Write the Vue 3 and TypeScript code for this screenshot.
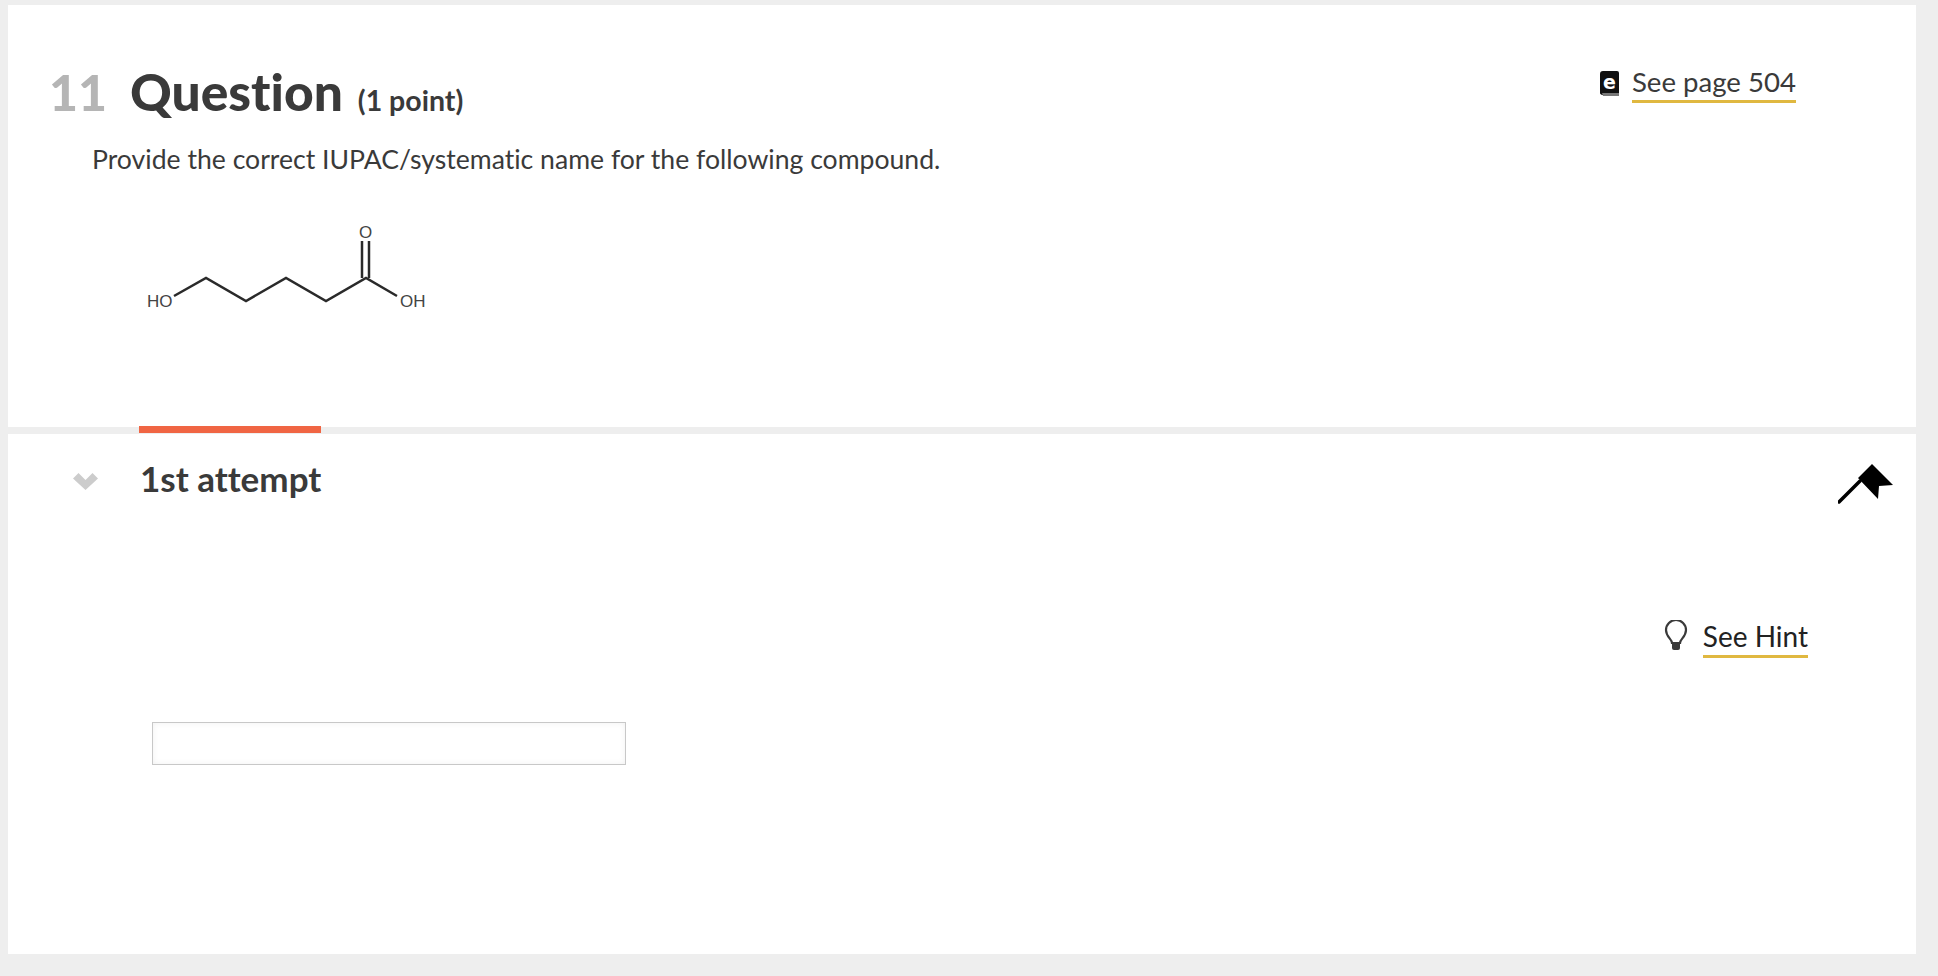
<script setup lang="ts">
const title = 'Question'
const prompt = 'Provide the correct IUPAC/systematic name for the following compound.'
</script>

<template>
  <div class="page">
    <section class="card question">
      <header class="question-head">
        <h1 class="heading">
          <span class="number">11</span>
          <span class="title">{{ title }}</span>
          <span class="points">(1 point)</span>
        </h1>
        <a class="page-link">
          <svg class="book" width="20" height="26" viewBox="0 0 20 26">
            <path d="M3 0h14a2 2 0 0 1 2 2v22H3a2.500 2.500 0 0 1-3-3V3a3 3 0 0 1 3-3z" fill="#111" />
            <path d="M2 22h17v3H3z" fill="#777" />
            <text x="9.500" y="18" text-anchor="middle" class="book-letter">e</text>
          </svg>
          <span class="link-text">See page 504</span>
        </a>
      </header>
      <p class="prompt">{{ prompt }}</p>
      <svg class="molecule" width="300" height="120" viewBox="0 0 300 120">
        <polyline class="bond" points="33,75 65,57 105,80 145,57 185,80 225,57 256,75" />
        <line class="bond" x1="221" y1="57" x2="221" y2="20" />
        <line class="bond" x1="228" y1="57" x2="228" y2="20" />
        <text class="atom" x="6" y="86">HO</text>
        <text class="atom" x="259" y="86">OH</text>
        <text class="atom" x="224.500" y="17" text-anchor="middle">O</text>
      </svg>
    </section>

    <section class="card attempt">
      <span class="attempt-tab"></span>
      <header class="attempt-head">
        <svg class="chevron" width="25" height="17" viewBox="0 0 25 17">
          <path d="M0 5.500l5.500-5.500 7 7 7-7 5.500 5.500-12.500 11.500z" fill="#ccc" />
        </svg>
        <h2 class="attempt-title">1st attempt</h2>
        <svg class="flag" width="56" height="40" viewBox="0 0 56 40">
          <path d="M1 38L22 17" stroke="#000" stroke-width="3.500" stroke-linecap="round" fill="none" />
          <path d="M20 14L34 0l21 21-14 1-1 13z" fill="#000" />
        </svg>
      </header>
      <div class="hint-row">
        <a class="hint-link">
          <svg class="bulb" width="24" height="32" viewBox="0 0 24 32">
            <path
              d="M8 23c0-4-6-6-6-13a10 10 0 0 1 20 0c0 7-6 9-6 13z"
              fill="none"
              stroke="#3a3a3a"
              stroke-width="2.200"
            />
            <path d="M8 23h8v5a2 2 0 0 1-2 2h-4a2 2 0 0 1-2-2z" fill="#3a3a3a" />
          </svg>
          <span class="link-text dark">See Hint</span>
        </a>
      </div>
      <input class="answer" type="text" />
    </section>
  </div>
</template>

<style>
html,
body {
  margin: 0;
  background: #eeeeee;
}
</style>

<style scoped>
.page {
  display: flex;
  flex-direction: column;
  gap: 7px;
  height: 976px;
  box-sizing: border-box;
  padding: 5px 22px 22px 8px;
  font-family: Lato, 'Liberation Sans', sans-serif;
  font-variant-ligatures: none;
  color: #3a3a3a;
}

.card {
  background: #fff;
}

.question {
  height: 422px;
  box-sizing: border-box;
  padding: 56px 120px 0 41px;
}

.question-head {
  display: flex;
  justify-content: space-between;
  align-items: flex-start;
}

.heading {
  display: flex;
  align-items: baseline;
  margin: 0;
  line-height: 60px;
}

.number {
  font-size: 50px;
  font-weight: 900;
  color: #b5b5b5;
  margin-right: 23px;
}

.title {
  font-size: 51.500px;
  font-weight: 900;
  margin-right: 15px;
}

.points {
  font-size: 28.500px;
  font-weight: 700;
}

.page-link {
  display: flex;
  align-items: flex-start;
  gap: 12px;
  margin-top: 4px;
}

.book {
  margin-top: 6px;
}

.book-letter {
  font-family: 'DejaVu Sans', sans-serif;
  font-size: 19px;
  font-weight: 700;
  fill: #fff;
}

.link-text {
  font-size: 27.600px;
  line-height: 33px;
  padding-bottom: 2px;
  border-bottom: 3px solid #e0b840;
}

.link-text.dark {
  font-size: 28px;
  color: #222;
}

.prompt {
  margin: 11.500px 0 0 43px;
  font-size: 26.600px;
  line-height: 34px;
}

.molecule {
  display: block;
  margin: 45px 0 0 92px;
}

.bond {
  fill: none;
  stroke: #2a2a2a;
  stroke-width: 2.500;
}

.atom {
  font-family: 'Liberation Sans', sans-serif;
  font-size: 17px;
  fill: #444;
}

.attempt {
  position: relative;
  flex: 1;
  display: flex;
  flex-direction: column;
}

.attempt-tab {
  position: absolute;
  left: 131px;
  top: -8px;
  width: 182px;
  height: 7px;
  background: #f06543;
}

.attempt-head {
  display: flex;
  align-items: center;
  padding: 24px 22px 0 65px;
  height: 40px;
}

.chevron {
  margin-top: 7px;
}

.attempt-title {
  flex: 1;
  margin: 0 0 0 42px;
  font-size: 35px;
  font-weight: 700;
  line-height: 40px;
}

.flag {
  margin-top: 12px;
}

.hint-row {
  display: flex;
  justify-content: flex-end;
  padding: 122px 108px 0 0;
}

.hint-link {
  display: flex;
  align-items: flex-start;
  gap: 15px;
}

.answer {
  display: block;
  width: 474px;
  height: 43px;
  box-sizing: border-box;
  margin: 64px 0 0 144px;
  border: 1px solid #c8c8c8;
  background: #fff;
  box-shadow: inset 0 0 6px rgba(0, 0, 0, 0.06);
  outline: none;
}
</style>
